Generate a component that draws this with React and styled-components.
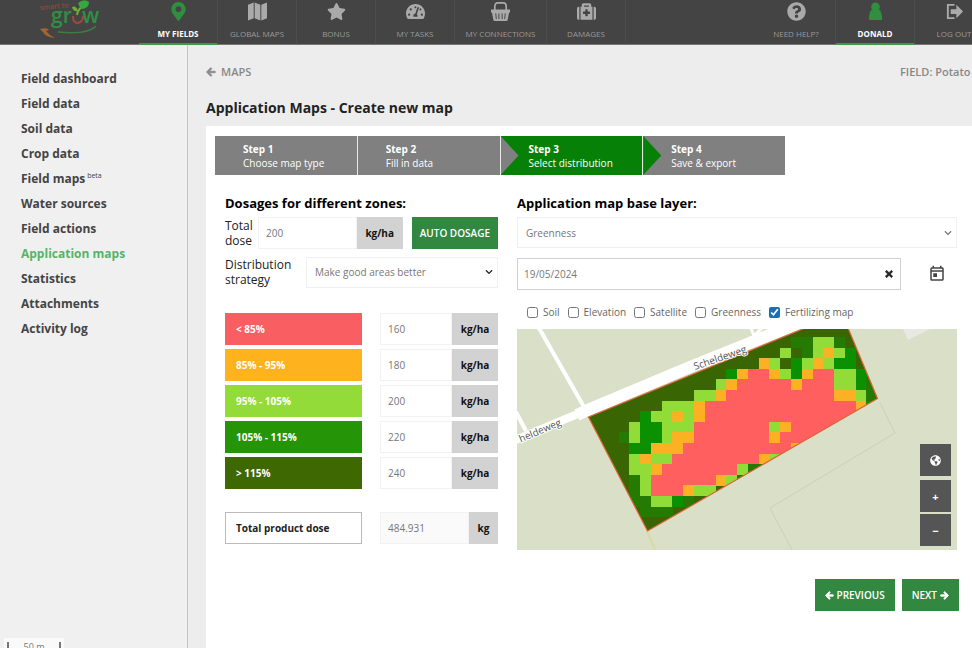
import React, { useState } from "react"
import styled, { createGlobalStyle, css } from "styled-components"
import {
  FaArrowLeft,
  FaArrowRight,
  FaChevronDown,
  FaGlobeAmericas,
  FaMapMarkerAlt,
  FaMedkit,
  FaQuestionCircle,
  FaStar,
  FaTachometerAlt,
  FaTimes,
} from "react-icons/fa"
import { MdOutlineToday } from "react-icons/md"

const GlobalStyle = createGlobalStyle`
  * {
    box-sizing: border-box;
  }
  body {
    margin: 0;
    background: #ededed;
    color: #222;
    font-family: "Open Sans", "Noto Sans", sans-serif;
    font-size: 12px;
    overflow: hidden;
  }
  button, input, select {
    font-family: inherit;
    border-radius: 0;
    margin: 0;
  }
`

const Page = styled.div`
  display: flex;
  flex-direction: column;
  min-height: 100vh;
`

/* header */

const Header = styled.header`
  display: flex;
  height: 45px;
  margin-right: -22px;
  background: #444;
  border-bottom: 1px solid #777;
`

const Logo = styled.a`
  flex: 0 0 139px;
  padding-left: 36px;
`

const Nav = styled.nav`
  display: flex;
`

const Spacer = styled.div`
  flex: 1;
`

const NavLink = styled.a`
  display: flex;
  flex-direction: column;
  align-items: center;
  justify-content: space-between;
  height: 45px;
  min-width: ${(p) => (p.$wide ? "92px" : "79px")};
  padding: 2px 4px 3px;
  border-right: 1px solid #4d4d4d;
  border-bottom: 2px solid ${(p) => (p.$active ? "#3d9a4b" : "transparent")};
  color: ${(p) => (p.$active ? "#fff" : "#999")};
  font-size: 8px;
  font-weight: ${(p) => (p.$active ? 700 : 400)};
  line-height: 12px;
  text-decoration: none;
  text-transform: uppercase;
  white-space: nowrap;

  svg {
    width: 19px;
    height: 19px;
    color: ${(p) => (p.$active ? "#2f8f3e" : "#aaa")};
  }
`

/* sidebar */

const Body = styled.div`
  display: flex;
  flex: 1;
`

const Sidebar = styled.nav`
  flex: 0 0 188px;
  padding: 21px 0 0 21px;
  background: #f0f0f0;
  border-right: 1px solid #c4c4c4;
`

const SideList = styled.ul`
  margin: 0;
  padding: 0;
  list-style: none;
`

const SideItem = styled.li`
  line-height: 25px;
`

const SideLink = styled.a`
  color: ${(p) => (p.$active ? "#58b368" : "#444")};
  font-size: 12px;
  font-weight: 700;
  text-decoration: none;

  sup {
    font-size: 7px;
    font-weight: 400;
    line-height: 0;
  }
`

const ScaleBar = styled.div`
  position: fixed;
  left: 4px;
  bottom: 0;
  width: 60px;
  height: 10px;
  padding: 0 3px;
  background: #fafafa;
  overflow: hidden;

  span {
    display: block;
    height: 14px;
    margin-top: 4px;
    border: solid #777;
    border-width: 0 2px;
    color: #777;
    font-size: 9px;
    line-height: 9px;
    text-align: center;
  }
`

/* main column */

const Main = styled.main`
  display: flex;
  flex: 1;
  flex-direction: column;
  min-width: 0;
  padding: 18px 0 0 18px;
`

const Crumbs = styled.div`
  display: flex;
  justify-content: space-between;
  color: #888;
  line-height: 18px;
`

const BackLink = styled.a`
  display: flex;
  align-items: center;
  gap: 5px;
  color: #888;
  font-size: 11px;
  font-weight: 600;
  text-decoration: none;
`

const FieldName = styled.span`
  flex: 0 0 72px;
  font-size: 11px;
  font-weight: 600;
  white-space: nowrap;
`

const Title = styled.h1`
  margin: 15px 0 7px;
  font-size: 14px;
  font-weight: 700;
  line-height: 23px;
`

const Panel = styled.section`
  flex: 1;
  padding: 10px 13px 37px 9px;
  background: #fff;
`

const Steps = styled.ol`
  display: flex;
  max-width: 570px;
  margin: 0 0 18px;
  padding: 0;
  list-style: none;
`

const Step = styled.li`
  position: relative;
  flex: 1;
  height: 39px;
  padding: 6px 0 0 28px;
  background: ${(p) => (p.$active ? "#078007" : "#808080")};
  color: #fff;
  font-size: 10px;
  line-height: 14px;

  & + & {
    border-left: 1px solid #e8e8e8;
  }

  strong {
    display: block;
  }

  ${(p) =>
    p.$arrow &&
    css`
      &::before {
        content: "";
        position: absolute;
        top: 0;
        bottom: 0;
        left: 0;
        width: 18px;
        background: ${p.$arrow};
        clip-path: polygon(0 0, 100% 50%, 0 100%);
      }
    `}
`

const Columns = styled.div`
  display: grid;
  grid-template-columns: 273px minmax(0, 1fr);
  gap: 19px;
  padding: 0 2px 0 10px;
`

const Heading = styled.h2`
  margin: 0 0 4px;
  color: #000;
  font-size: 13px;
  font-weight: 700;
  line-height: 20px;
`

const FormRow = styled.div`
  display: flex;
  align-items: center;
  height: 32px;
  margin-bottom: ${(p) => (p.$last ? "25px" : "7px")};
`

const Label = styled.label`
  flex: 0 0 ${(p) => (p.$wide ? "81px" : "33px")};
  font-size: 12px;
  line-height: 15px;
`

const Group = styled.div`
  display: flex;
  flex: 1;
  min-width: 0;
  height: 32px;
`

const NumberInput = styled.input`
  flex: 1;
  width: 0;
  min-width: 0;
  padding: 0 7px;
  border: 1px solid #f2f2f2;
  background: ${(p) => (p.readOnly ? "#fafafa" : "#fff")};
  color: #777;
  font-size: 10px;
`

const Unit = styled.span`
  flex: 0 0 ${(p) => (p.$small ? "29px" : "46px")};
  background: #d2d2d2;
  color: #111;
  font-size: 10px;
  font-weight: 700;
  line-height: 32px;
  text-align: center;
`

const Button = styled.button`
  display: flex;
  align-items: center;
  justify-content: center;
  gap: 3px;
  height: 32px;
  padding: 0 10px;
  border: 0;
  background: #338841;
  color: #fff;
  font-size: 10px;
  font-weight: 600;
  text-transform: uppercase;
  white-space: nowrap;

  svg {
    stroke: currentColor;
    stroke-width: 50px;
  }
`

const AutoButton = styled(Button)`
  margin-left: 9px;
  padding: 0 8px;
`

const SelectWrap = styled.div`
  display: flex;
  align-items: center;
  flex: 1;
  height: 31px;
  border: 1px solid #f0f0f0;

  select {
    flex: 1;
    height: 100%;
    margin-right: -18px;
    padding: 0 8px;
    border: 0;
    appearance: none;
    background: transparent;
    color: #777;
    font-size: 10px;
  }

  svg {
    flex: none;
    width: 8px;
    height: 8px;
    margin-right: 4px;
    color: ${(p) => p.$arrow};
    pointer-events: none;
  }
`

const Zones = styled.div`
  display: grid;
  gap: 4px;
`

const ZoneRow = styled.div`
  display: grid;
  grid-template-columns: 137px 118px;
  justify-content: space-between;
`

const ZoneLabel = styled.label`
  padding: 0 11px;
  background: ${(p) => p.$color};
  color: #fff;
  font-size: 10px;
  font-weight: 700;
  line-height: 32px;
`

const TotalRow = styled(ZoneRow)`
  margin-top: 23px;
`

const TotalLabel = styled(ZoneLabel)`
  padding: 0 10px;
  border: 1px solid #bbb;
  background: #fff;
  color: #222;
  line-height: 30px;
`

const DateRow = styled.div`
  display: flex;
  align-items: center;
  margin: 10px 0 14px;
`

const DateField = styled.div`
  display: flex;
  flex: 1;
  align-items: center;
  height: 32px;
  border: 1px solid #d0d0d0;

  input {
    flex: 1;
    padding: 0 6px;
    border: 0;
    outline: 0;
    color: #777;
    font-size: 10px;
  }
`

const IconButton = styled.button`
  display: flex;
  align-items: center;
  justify-content: center;
  width: 22px;
  height: 28px;
  padding: 0;
  border: 0;
  background: none;
  color: #222;
  font-size: 10px;
`

const CalendarButton = styled(IconButton)`
  width: 40px;
  margin-left: 16px;
  color: #444;
  font-size: 18px;
`

const Layers = styled.div`
  display: flex;
  gap: 8px;
  height: 25px;
  padding-left: 10px;
`

const LayerLabel = styled.label`
  display: flex;
  align-items: center;
  gap: 5px;
  height: 16px;
  color: #666;
  font-size: 10px;
  white-space: nowrap;

  input {
    width: 11px;
    height: 11px;
    accent-color: #1a6fb5;
  }
`

const MapBox = styled.div`
  position: relative;

  > svg {
    display: block;
    width: 100%;
  }
`

const MapControls = styled.div`
  position: absolute;
  right: 6px;
  bottom: 4px;
  display: grid;
  gap: 2px;
`

const MapButton = styled.button`
  display: flex;
  align-items: center;
  justify-content: center;
  width: 31px;
  height: 32px;
  margin-bottom: ${(p) => (p.$apart ? "2px" : "0")};
  padding: 0;
  border: 0;
  background: #555;
  color: #fff;
  font-size: 11px;
  font-weight: 700;
`

const Actions = styled.div`
  display: flex;
  justify-content: flex-end;
  gap: 7px;
  margin-top: 29px;
`

const GrowLogo = () => (
  <svg width="68" height="42" viewBox="0 0 68 42">
    <text x="4" y="10" fontSize="7" fontWeight="600" fill="#8e4a3c" transform="rotate(-5 4 9)">
      smart to
    </text>
    <text x="15" y="23" fontSize="21" fontWeight="600" fill="#2f9045">
      gr
    </text>
    <text x="46" y="23" fontSize="21" fontWeight="600" fill="#2f9045">
      w
    </text>
    <path d="M37 16q0 7 5 7q5-1 5-7" fill="none" stroke="#a04a3c" strokeWidth="2" />
    <path d="M41 15q1-6 5-8" fill="none" stroke="#6fae36" strokeWidth="2" />
    <path d="M42 3q6-5 11-1q0 7-8 7q-2-3-3-6z" fill="#35a83f" />
    <path d="M36 7q4-2 6 4q-5 1-6-4z" fill="#6fae36" />
    <path d="M60 26q-8 9-38 6" fill="none" stroke="#3e7d42" strokeWidth="1.3" />
    <path d="M4 29q7-2 9 1l-3 1q3 4 9 7q-10-1-12-6z" fill="#a36632" />
  </svg>
)

const MapIcon = () => (
  <svg viewBox="0 0 20 20" fill="currentColor">
    <path d="M0 3L6 .5V17L0 19.500zM7 .5l6 2.500v16.500L7 17zM14 3l6-2.500V17l-6 2.500z" />
  </svg>
)

const BasketIcon = () => (
  <svg viewBox="0 0 20 20" fill="none" stroke="currentColor">
    <path d="M4 9V5q0-4 3-4h6q3 0 3 4v4" strokeWidth="1.8" />
    <path d="M0 8h20v3h-1l-1.500 8q-.2 1-1.500 1H4q-1.300 0-1.500-1L1 11H0z" fill="currentColor" stroke="none" />
    <path d="M5 12l.6 6M8.300 12v6M11.700 12v6M15 12l-.6 6" stroke="#444" />
  </svg>
)

const PawnIcon = () => (
  <svg viewBox="0 0 20 20" fill="currentColor">
    <circle cx="10" cy="5" r="4.500" />
    <path d="M6 8h8q3 3 3 10q0 1-1 1H4q-1 0-1-1q0-7 3-10z" />
  </svg>
)

const LogoutIcon = () => (
  <svg viewBox="0 0 20 20">
    <path d="M10 3H3v14h7" fill="none" stroke="currentColor" strokeWidth="2" />
    <path d="M6 7.500h6V3l7 7l-7 7v-4.500H6z" fill="currentColor" />
  </svg>
)

const cellColors = {
  r: "#ff5f5f",
  y: "#fcb024",
  l: "#92dc38",
  g: "#0b9002",
  m: "#257a02",
}

// one character per raster cell, dots show the field's own colour
const fieldCells = [
  "................mmllm...",
  "...............l.mlylg..",
  ".............yl.glylgg..",
  "..........gyrrylgyrrllg.",
  ".........lyrrrrryrrrllgm",
  ".......llyrrrrrrrrrryylm",
  "....lllyrrrrrrrrrrrrrryg",
  "..gllylyrrrrrrrrrrrrrrrr",
  ".lgglllrrrrrrrlyrrrrrrrr",
  "mlgglyyrrrrrrryrrrrrrrrr",
  ".ggyyyrrrrrrrrrryrrrrrrr",
  ".lyllrrrrrrrrylmrrrrrrrr",
  ".llyrrrrrrrlmmm.........",
  ".mlrrrrrrylm............",
  ".mlrrryll...............",
  ".mmllgm.................",
  "..mmm...................",
]

const FieldMap = () => (
  <svg viewBox="0 0 440 221" role="img" aria-label="Fertilizing map">
    <defs>
      <clipPath id="field">
        <path d="M71.500 88L130.500 202L360.500 69.500L331-1H288z" />
      </clipPath>
    </defs>
    <rect width="440" height="221" fill="#dadfc7" />
    <path d="M386 0h27l-22 11z" fill="#e9e9e2" />
    <path d="M363 74l15 30l-125 75l22 42" fill="none" stroke="#cbcfb8" />
    <path d="M130 202l8 19" stroke="#d8da9f" strokeWidth="2" />
    <g fill="none" stroke="#fff">
      <path d="M22-1L67 78M-1 83L9 102" strokeWidth="4" />
      <path d="M234-1l3 8l8-8" strokeWidth="3" />
      <path d="M-4 112L46 91L73 80" strokeWidth="8" />
      <path d="M60 86L73 80L173 38L282-6" strokeWidth="12" />
    </g>
    <g clipPath="url(#field)">
      <rect width="440" height="221" fill="#396602" />
      <g shapeRendering="crispEdges">
        {fieldCells.map((row, y) =>
          row.split("").map(
            (cell, x) =>
              cell !== "." && (
                <rect
                  key={`${x}-${y}`}
                  x={101.5 + x * 10.78}
                  y={8 + y * 10.6}
                  width="10.9"
                  height="10.7"
                  fill={cellColors[cell]}
                />
              )
          )
        )}
      </g>
    </g>
    <path
      d="M288-1L71.500 88L130.500 202L360.500 69.500L331-1"
      fill="none"
      stroke="#e0653a"
      strokeWidth="1.2"
    />
    <g fill="#555" stroke="#fff" strokeWidth="2" paintOrder="stroke" fontSize="10">
      <text transform="translate(178 41) rotate(-19)">Scheldeweg</text>
      <text transform="translate(45 96) rotate(-23)" textAnchor="end">
        heldeweg
      </text>
    </g>
  </svg>
)

const mainNav = [
  { label: "My fields", icon: <FaMapMarkerAlt />, active: true },
  { label: "Global maps", icon: <MapIcon /> },
  { label: "Bonus", icon: <FaStar /> },
  { label: "My tasks", icon: <FaTachometerAlt /> },
  { label: "My connections", icon: <BasketIcon />, wide: true },
  { label: "Damages", icon: <FaMedkit /> },
]

const userNav = [
  { label: "Need help?", icon: <FaQuestionCircle /> },
  { label: "Donald", icon: <PawnIcon />, active: true },
  { label: "Log out", icon: <LogoutIcon /> },
]

const sideLinks = [
  "Field dashboard",
  "Field data",
  "Soil data",
  "Crop data",
  "Field maps",
  "Water sources",
  "Field actions",
  "Application maps",
  "Statistics",
  "Attachments",
  "Activity log",
]

const zones = [
  { label: "< 85%", color: "#f95f62", dose: "160" },
  { label: "85% - 95%", color: "#fdb21e", dose: "180" },
  { label: "95% - 105%", color: "#93db38", dose: "200" },
  { label: "105% - 115%", color: "#259407", dose: "220" },
  { label: "> 115%", color: "#3e6802", dose: "240" },
]

const layerNames = ["Soil", "Elevation", "Satellite", "Greenness", "Fertilizing map"]

const NavItems = ({ items }) => (
  <Nav>
    {items.map((item) => (
      <NavLink key={item.label} href="#" $active={item.active} $wide={item.wide}>
        {item.icon}
        {item.label}
      </NavLink>
    ))}
  </Nav>
)

const App = () => {
  const [date, setDate] = useState("19/05/2024")

  return (
    <Page>
      <GlobalStyle />
      <Header>
        <Logo href="#" aria-label="Home">
          <GrowLogo />
        </Logo>
        <NavItems items={mainNav} />
        <Spacer />
        <NavItems items={userNav} />
      </Header>
      <Body>
        <Sidebar>
          <SideList>
            {sideLinks.map((name) => (
              <SideItem key={name}>
                <SideLink href="#" $active={name === "Application maps"}>
                  {name}
                  {name === "Field maps" && <sup> beta</sup>}
                </SideLink>
              </SideItem>
            ))}
          </SideList>
        </Sidebar>
        <Main>
          <Crumbs>
            <BackLink href="#">
              <FaArrowLeft size={10} stroke="currentColor" strokeWidth="40" />
              MAPS
            </BackLink>
            <FieldName>FIELD: Potato</FieldName>
          </Crumbs>
          <Title>Application Maps - Create new map</Title>
          <Panel>
            <Steps>
              <Step>
                <strong>Step 1</strong>Choose map type
              </Step>
              <Step>
                <strong>Step 2</strong>Fill in data
              </Step>
              <Step $active $arrow="#808080">
                <strong>Step 3</strong>Select distribution
              </Step>
              <Step $arrow="#078007">
                <strong>Step 4</strong>Save &amp; export
              </Step>
            </Steps>
            <Columns>
              <div>
                <Heading>Dosages for different zones:</Heading>
                <FormRow>
                  <Label htmlFor="total-dose">Total dose</Label>
                  <Group>
                    <NumberInput id="total-dose" defaultValue="200" />
                    <Unit>kg/ha</Unit>
                  </Group>
                  <AutoButton type="button">Auto dosage</AutoButton>
                </FormRow>
                <FormRow $last>
                  <Label htmlFor="strategy" $wide>
                    Distribution strategy
                  </Label>
                  <SelectWrap $arrow="#222">
                    <select id="strategy">
                      <option>Make good areas better</option>
                    </select>
                    <FaChevronDown />
                  </SelectWrap>
                </FormRow>
                <Zones>
                  {zones.map((zone, i) => (
                    <ZoneRow key={zone.label}>
                      <ZoneLabel htmlFor={`zone-${i}`} $color={zone.color}>
                        {zone.label}
                      </ZoneLabel>
                      <Group>
                        <NumberInput id={`zone-${i}`} defaultValue={zone.dose} />
                        <Unit>kg/ha</Unit>
                      </Group>
                    </ZoneRow>
                  ))}
                </Zones>
                <TotalRow>
                  <TotalLabel htmlFor="total-product">Total product dose</TotalLabel>
                  <Group>
                    <NumberInput id="total-product" value="484.931" readOnly />
                    <Unit $small>kg</Unit>
                  </Group>
                </TotalRow>
              </div>
              <div>
                <Heading>Application map base layer:</Heading>
                <SelectWrap $arrow="#777">
                  <select aria-label="Application map base layer">
                    <option>Greenness</option>
                  </select>
                  <FaChevronDown />
                </SelectWrap>
                <DateRow>
                  <DateField>
                    <input
                      aria-label="Date"
                      value={date}
                      onChange={(e) => setDate(e.target.value)}
                    />
                    <IconButton
                      type="button"
                      aria-label="Clear date"
                      onClick={() => setDate("")}
                    >
                      <FaTimes stroke="currentColor" strokeWidth="40" />
                    </IconButton>
                  </DateField>
                  <CalendarButton type="button" aria-label="Open calendar">
                    <MdOutlineToday />
                  </CalendarButton>
                </DateRow>
                <Layers>
                  {layerNames.map((name) => (
                    <LayerLabel key={name}>
                      <input type="checkbox" defaultChecked={name === "Fertilizing map"} />
                      {name}
                    </LayerLabel>
                  ))}
                </Layers>
                <MapBox>
                  <FieldMap />
                  <MapControls>
                    <MapButton type="button" aria-label="Whole map" $apart>
                      <FaGlobeAmericas />
                    </MapButton>
                    <MapButton type="button">+</MapButton>
                    <MapButton type="button">−</MapButton>
                  </MapControls>
                </MapBox>
              </div>
            </Columns>
            <Actions>
              <Button type="button">
                <FaArrowLeft size={9} />
                Previous
              </Button>
              <Button type="button">
                Next
                <FaArrowRight size={9} />
              </Button>
            </Actions>
          </Panel>
        </Main>
      </Body>
      <ScaleBar>
        <span>50 m</span>
      </ScaleBar>
    </Page>
  )
}

export default App
